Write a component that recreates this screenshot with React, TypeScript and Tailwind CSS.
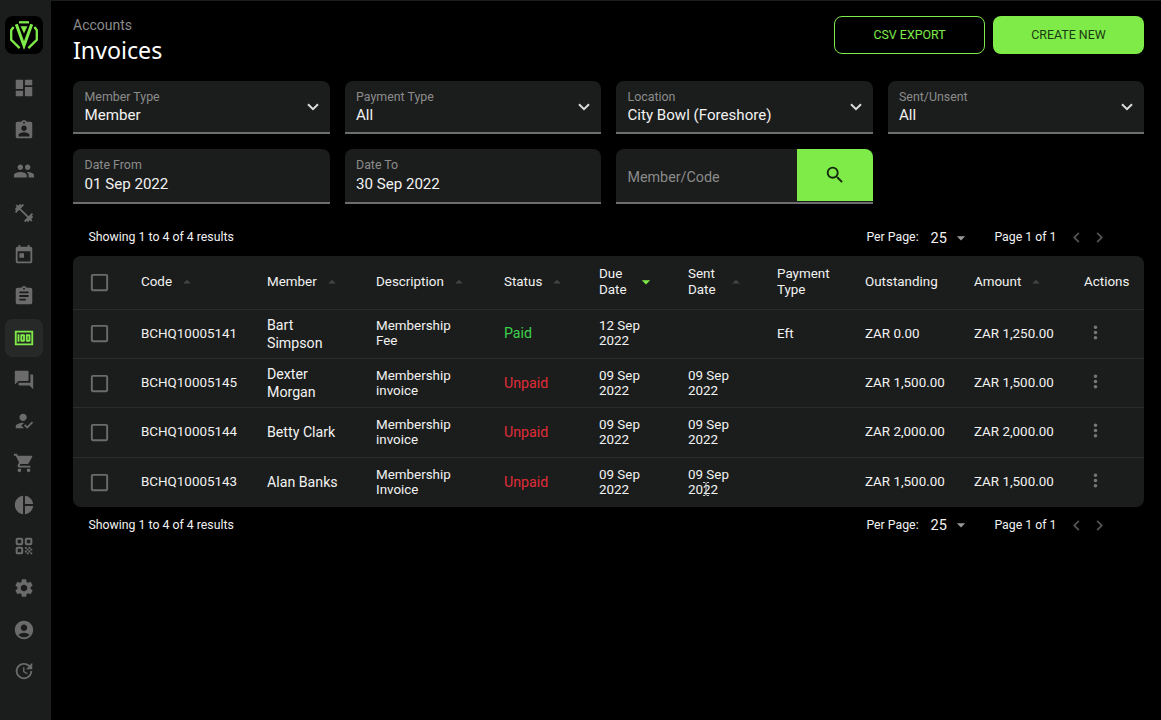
import { useState } from 'react';
import {
  MdAccountCircle,
  MdArrowDropDown,
  MdArrowDropUp,
  MdAssignment,
  MdAssignmentInd,
  MdCheckBoxOutlineBlank,
  MdChevronLeft,
  MdChevronRight,
  MdDashboard,
  MdFitnessCenter,
  MdForum,
  MdHowToReg,
  MdMoney,
  MdMoreVert,
  MdPeople,
  MdPieChart,
  MdSearch,
  MdSettings,
  MdShoppingCart,
  MdToday,
  MdUpdate,
} from 'react-icons/md';

interface Invoice {
  code: string;
  member: string;
  description: string;
  status: 'Paid' | 'Unpaid';
  dueDate: string;
  sentDate?: string;
  paymentType?: string;
  outstanding: string;
  amount: string;
}

const invoices: Invoice[] = [
  {
    code: 'BCHQ10005141',
    member: 'Bart Simpson',
    description: 'Membership Fee',
    status: 'Paid',
    dueDate: '12 Sep 2022',
    paymentType: 'Eft',
    outstanding: 'ZAR 0.00',
    amount: 'ZAR 1,250.00',
  },
  {
    code: 'BCHQ10005145',
    member: 'Dexter Morgan',
    description: 'Membership invoice',
    status: 'Unpaid',
    dueDate: '09 Sep 2022',
    sentDate: '09 Sep 2022',
    outstanding: 'ZAR 1,500.00',
    amount: 'ZAR 1,500.00',
  },
  {
    code: 'BCHQ10005144',
    member: 'Betty Clark',
    description: 'Membership invoice',
    status: 'Unpaid',
    dueDate: '09 Sep 2022',
    sentDate: '09 Sep 2022',
    outstanding: 'ZAR 2,000.00',
    amount: 'ZAR 2,000.00',
  },
  {
    code: 'BCHQ10005143',
    member: 'Alan Banks',
    description: 'Membership Invoice',
    status: 'Unpaid',
    dueDate: '09 Sep 2022',
    sentDate: '09 Sep 2022',
    outstanding: 'ZAR 1,500.00',
    amount: 'ZAR 1,500.00',
  },
];

function QrIcon({ className }: { className?: string }) {
  return (
    <svg viewBox="0 0 24 24" className={className} fill="none" stroke="currentColor" strokeWidth="2.2">
      <rect x="4" y="4" width="6" height="6" rx="1" />
      <rect x="14" y="4" width="6" height="6" rx="1" />
      <rect x="4" y="14" width="6" height="6" rx="1" />
      <path
        d="M13 13h2v2h-2zM17 13h2v2h-2zM15 15h2v2h-2zM19 15h2v2h-2zM13 17h2v2h-2zM17 17h2v2h-2zM15 19h2v2h-2zM19 19h2v2h-2z"
        fill="currentColor"
        stroke="none"
      />
    </svg>
  );
}

const navItems = [
  MdDashboard,
  MdAssignmentInd,
  MdPeople,
  MdFitnessCenter,
  MdToday,
  MdAssignment,
  MdMoney,
  MdForum,
  MdHowToReg,
  MdShoppingCart,
  MdPieChart,
  QrIcon,
  MdSettings,
  MdAccountCircle,
  MdUpdate,
];

const columns = [
  { label: 'Code', width: 'w-[126px]', sort: 'up' },
  { label: 'Member', width: 'w-[109px]', sort: 'up' },
  { label: 'Description', width: 'w-[128px]', sort: 'up' },
  { label: 'Status', width: 'w-[95px]', sort: 'up' },
  { label: 'Due Date', width: 'w-[89px]', sort: 'active' },
  { label: 'Sent Date', width: 'w-[89px]', sort: 'up' },
  { label: 'Payment Type', width: 'w-[88px]' },
  { label: 'Outstanding', width: 'w-[109px]' },
  { label: 'Amount', width: 'w-[110px]', sort: 'up' },
  { label: 'Actions', width: 'w-[60px]' },
];

function Logo() {
  return (
    <svg viewBox="0 0 38 38" className="h-[38px] w-[38px]" fill="none" stroke="#7feb49" strokeWidth="2.3">
      <path d="M14 6.3h10" />
      <path d="M15.6 10.2h6.8L19 17.6z" fill="#7feb49" stroke="none" />
      <path d="M11.3 8.2L19 29.5l7.7-21.3" strokeWidth="3" />
      <path d="M8.6 11L6.2 14.2v9.6l8.4 8.3M29.4 11l2.4 3.2v9.6l-8.4 8.3" />
    </svg>
  );
}

function Sidebar() {
  return (
    <aside className="flex w-[51px] shrink-0 flex-col items-center bg-[#1b1d1c] pt-4 pr-[3px]">
      <div className="mb-[15px] h-[38px] w-[38px] rounded-lg bg-black">
        <Logo />
      </div>
      {navItems.map((Icon, i) => (
        <div
          key={i}
          className={`mb-[3.68px] flex h-[38px] w-[38px] shrink-0 items-center justify-center rounded-lg ${
            Icon === MdMoney ? 'bg-[#272928] text-[#7feb49]' : 'text-[#6b6b6b]'
          }`}
        >
          <Icon className="h-[22px] w-[22px]" />
        </div>
      ))}
    </aside>
  );
}

function SelectField({ label, value }: { label: string; value: string }) {
  return (
    <div className="flex h-[53px] items-center justify-between rounded-t-lg border-b-2 border-[#6d6d6d] bg-[#1b1d1c] pr-[11px] pl-[11.5px]">
      <div>
        <div className="text-[12.4px] leading-[18px] text-[#8b8b8b]">{label}</div>
        <div className="text-[15.1px] leading-[19px]">{value}</div>
      </div>
      <svg viewBox="0 0 12 8" className="h-2 w-3" fill="none" stroke="#dcdcdc" strokeWidth="2">
        <path d="M1 1.2l5 5 5-5" />
      </svg>
    </div>
  );
}

function DateField({ label, value }: { label: string; value: string }) {
  return (
    <div className="h-[55px] rounded-t-lg border-b-2 border-[#6d6d6d] bg-[#1b1d1c] pt-[7px] pl-[11.5px]">
      <div className="text-[12.4px] leading-[18px] text-[#8b8b8b]">{label}</div>
      <div className="text-[15.1px] leading-5">{value}</div>
    </div>
  );
}

function Pagination() {
  return (
    <div className="flex h-[31px] items-center pr-[34.5px] pl-[15.5px] text-[12.3px]">
      <span className="flex-1">Showing 1 to 4 of 4 results</span>
      <span>Per Page:</span>
      <span className="ml-3 pt-0.5 text-[14.5px]">25</span>
      <MdArrowDropDown className="ml-1 h-5 w-5 text-[#9a9a9a]" />
      <span className="ml-[23.5px]">Page 1 of 1</span>
      <MdChevronLeft className="ml-[9px] h-[21px] w-[21px] text-[#555]" />
      <MdChevronRight className="ml-[2px] h-[21px] w-[21px] text-[#555]" />
    </div>
  );
}

function Checkbox() {
  const [checked, setChecked] = useState(false);
  return (
    <button
      onClick={() => setChecked(!checked)}
      className={`block ${checked ? 'text-[#7feb49]' : 'text-[#6b6b6b]'}`}
    >
      <MdCheckBoxOutlineBlank className="h-[23px] w-[23px]" />
    </button>
  );
}

// Text cursor resting on the last sent date
function TextCursor() {
  return (
    <svg
      viewBox="0 0 8 14"
      className="pointer-events-none absolute top-[482px] left-[702px] h-[14px] w-[8px]"
      fill="none"
      stroke="#d0d0d0"
      strokeWidth="1"
    >
      <path d="M1 .5h2l1 1 1-1h2M4 1.5v11M1 13.5h2l1-1 1 1h2" />
    </svg>
  );
}

export default function App() {
  return (
    <div className="relative flex h-[720px] w-[1161px] overflow-hidden bg-black font-[Roboto,sans-serif] text-[#f2f2f2]">
      <Sidebar />
      <main className="min-w-0 flex-1 border-t border-[#1b1d1c] pr-[17px] pl-[22px]">
        <header className="flex h-20 justify-between pt-[15px]">
          <div className="-mt-px">
            <div className="text-[14px] leading-5 text-[#8b8b8b]">Accounts</div>
            <h1 className="font-['Noto_Sans',sans-serif] text-[23.2px] leading-[30px] text-white">Invoices</h1>
          </div>
          <div className="flex gap-2 text-[12.4px]">
            <button className="h-[38px] w-[151px] rounded-lg border border-[#7feb49] text-[#7feb49]">
              CSV EXPORT
            </button>
            <button className="h-[38px] w-[151px] rounded-lg bg-[#7feb49] text-[#1b3a12]">CREATE NEW</button>
          </div>
        </header>

        {/* Filters */}
        <div className="grid grid-cols-4 gap-x-[15px] gap-y-[15px]">
          <SelectField label="Member Type" value="Member" />
          <SelectField label="Payment Type" value="All" />
          <SelectField label="Location" value="City Bowl (Foreshore)" />
          <SelectField label="Sent/Unsent" value="All" />
          <DateField label="Date From" value="01 Sep 2022" />
          <DateField label="Date To" value="30 Sep 2022" />
          <div className="flex h-[55px] rounded-t-lg border-b-2 border-[#6d6d6d] bg-[#1b1d1c]">
            <input
              placeholder="Member/Code"
              className="min-w-0 flex-1 pt-[5px] pl-[11.5px] text-[14.3px] outline-none placeholder:text-[#8b8b8b]"
            />
            <button className="flex h-[52px] w-19 items-center justify-center rounded-tr-lg bg-[#7feb49] text-[#14260e]">
              <MdSearch className="h-[22px] w-[22px]" />
            </button>
          </div>
        </div>

        <div className="mt-[18px] mb-[3px]">
          <Pagination />
        </div>

        {/* Invoices */}
        <table className="w-full table-fixed overflow-hidden rounded-lg bg-[#1b1d1c] text-left text-[13.4px] leading-[15px]">
          <thead>
            <tr className="h-[53px]">
              <th className="w-[68px] pl-[15px]">
                <Checkbox />
              </th>
              {columns.map((col) => (
                <th key={col.label} className={`${col.width} font-normal`}>
                  <div className="flex items-center leading-4">
                    <span
                      className={
                        col.label.endsWith('Date') ? 'w-[37px]' : col.label === 'Payment Type' ? 'w-[60px]' : ''
                      }
                    >
                      {col.label}
                    </span>
                    {col.sort === 'up' && (
                      <MdArrowDropUp
                        className={`h-[18px] w-[18px] text-[#444] ${col.label.endsWith('Date') ? 'ml-[2px]' : 'ml-[6px]'}`}
                      />
                    )}
                    {col.sort === 'active' && <MdArrowDropDown className="h-[20px] w-[20px] text-[#7feb49]" />}
                  </div>
                </th>
              ))}
            </tr>
          </thead>
          <tbody>
            {invoices.map((inv) => (
              <tr key={inv.code} className="h-[49.4px] border-t border-[#2a2c2b]">
                <td className="pl-[15px]">
                  <Checkbox />
                </td>
                <td className="pb-px">{inv.code}</td>
                <td className="pr-8 text-[14.2px] leading-[18px]">
                  <div className={inv.member.length > 11 ? '' : 'whitespace-nowrap'}>{inv.member}</div>
                </td>
                <td className="pr-10 pb-px">{inv.description}</td>
                <td className={`text-[14.2px] ${inv.status === 'Paid' ? 'text-[#3bd24b]' : 'text-[#e02c38]'}`}>
                  {inv.status}
                </td>
                <td className="pr-10 pb-px">{inv.dueDate}</td>
                <td className="pr-10 pb-px">{inv.sentDate}</td>
                <td className="pb-px">{inv.paymentType}</td>
                <td className="pb-px">{inv.outstanding}</td>
                <td className="pb-px">{inv.amount}</td>
                <td className="pb-[3px]">
                  <MdMoreVert className="ml-px h-[21px] w-[21px] text-[#777]" />
                </td>
              </tr>
            ))}
          </tbody>
        </table>

        <div className="mt-[3px]">
          <Pagination />
        </div>
      </main>
      <TextCursor />
    </div>
  );
}
